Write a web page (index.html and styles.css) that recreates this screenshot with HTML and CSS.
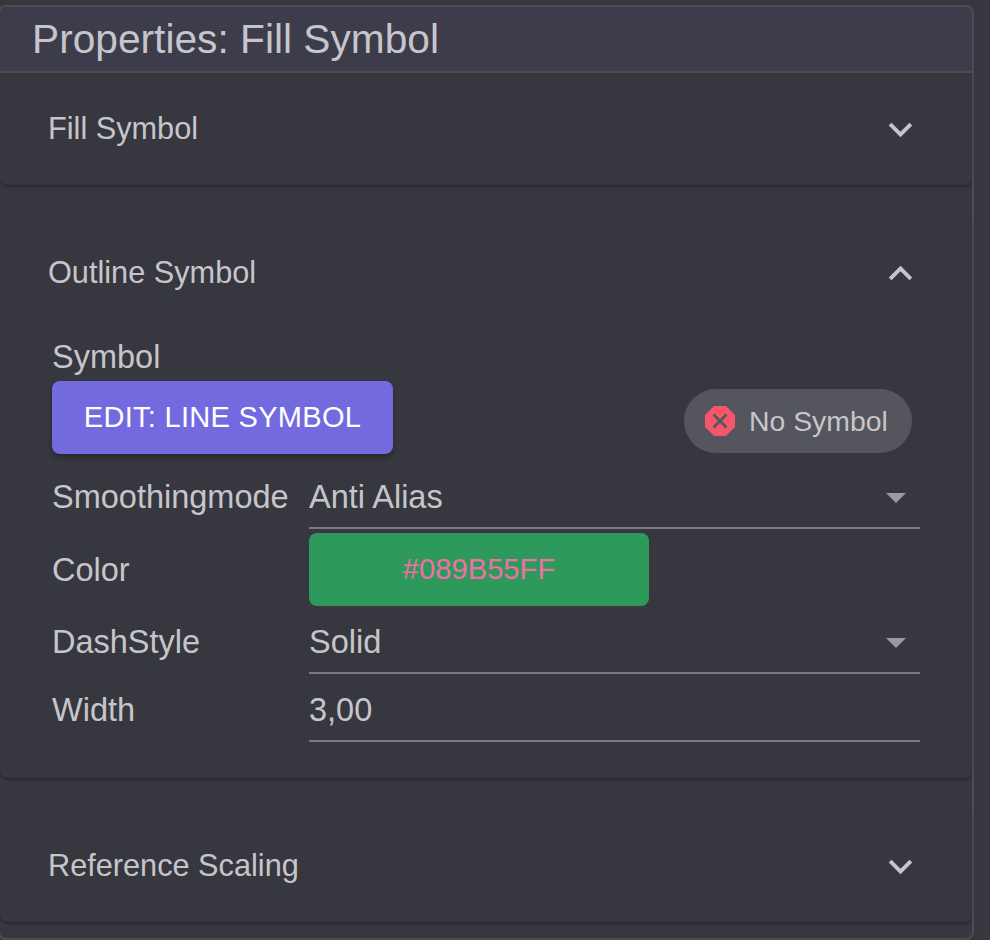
FILE: index.html
```html
<!DOCTYPE html>
<html lang="en">
<head>
<meta charset="utf-8">
<title>Properties: Fill Symbol</title>
<link rel="stylesheet" href="styles.css">
</head>
<body>
<section class="card">
  <h1 class="card-title">Properties: Fill Symbol</h1>
  <div class="panel">
    <div class="panel-head">
      <span>Fill Symbol</span>
      <svg class="chevron" viewBox="0 0 24 24"><path d="M16.59 8.59 12 13.17 7.41 8.59 6 10l6 6 6-6z"/></svg>
    </div>
  </div>
  <div class="panel panel-gap">
    <div class="panel-head">
      <span>Outline Symbol</span>
      <svg class="chevron" viewBox="0 0 24 24"><path d="M12 8l-6 6 1.41 1.41L12 10.83l4.59 4.58L18 14z"/></svg>
    </div>
    <div class="panel-body">
      <div class="symbol-row">
        <div class="symbol-left">
          <div class="symbol-label">Symbol</div>
          <button class="edit-btn" type="button">EDIT: LINE SYMBOL</button>
        </div>
        <div class="chip">
          <svg class="chip-icon" viewBox="0 0 30 30"><path class="oct" d="M9 0h12l9 9v12l-9 9H9l-9-9V9z"/><path class="oct-x" d="M8.500 8.500l13 13M21.500 8.500l-13 13"/></svg>
          <span>No Symbol</span>
        </div>
      </div>
      <div class="row row-smooth">
        <div class="label">Smoothingmode</div>
        <div class="field">
          <span>Anti Alias</span>
          <svg class="arrow" viewBox="0 0 24 24"><path d="M7 10l5 5 5-5z"/></svg>
        </div>
      </div>
      <div class="row-color">
        <div class="label">Color</div>
        <button class="color-btn" type="button">#089B55FF</button>
      </div>
      <div class="row row-dash">
        <div class="label">DashStyle</div>
        <div class="field">
          <span>Solid</span>
          <svg class="arrow" viewBox="0 0 24 24"><path d="M7 10l5 5 5-5z"/></svg>
        </div>
      </div>
      <div class="row row-width">
        <div class="label">Width</div>
        <div class="field"><span>3,00</span></div>
      </div>
    </div>
  </div>
  <div class="panel panel-gap">
    <div class="panel-head">
      <span>Reference Scaling</span>
      <svg class="chevron" viewBox="0 0 24 24"><path d="M16.59 8.59 12 13.17 7.41 8.59 6 10l6 6 6-6z"/></svg>
    </div>
  </div>
</section>
</body>
</html>
```
FILE: styles.css
```css
html, body {
  margin: 0;
  height: 940px;
  overflow: hidden;
  background: #37373f;
}
body {
  font-family: "Liberation Sans", Arial, sans-serif;
  color: #c6c6ca;
}
.card {
  box-sizing: border-box;
  width: 976px;
  height: 935px;
  margin: 5px 0 0 -2px;
  border: 2px solid #4c4c55;
  border-radius: 8px;
  background: #37373f;
}
.card-title {
  box-sizing: border-box;
  height: 66px;
  margin: 0;
  padding-left: 32px;
  background: #3d3c4a;
  border-bottom: 2px solid #4c4c55;
  border-radius: 6px 6px 0 0;
  font-size: 40.7px;
  font-weight: 400;
  line-height: 64px;
  color: #c6c6ca;
}
.panel {
  border-radius: 0 0 8px 8px;
  box-shadow: 0 2px 2px rgba(0, 0, 0, .25);
}
.panel-gap {
  margin-top: 32px;
  border-radius: 8px;
}
.panel-head {
  display: flex;
  align-items: center;
  justify-content: space-between;
  height: 112px;
  padding: 0 48.5px 0 48px;
  font-size: 30.7px;
}
.chevron {
  width: 47px;
  height: 47px;
  fill: #c6c6ca;
}
.panel-body {
  padding: 12px 52px 36px;
}
.symbol-row {
  display: flex;
  justify-content: space-between;
  align-items: flex-end;
  padding-right: 8px;
}
.symbol-label {
  height: 40px;
  font-size: 32.5px;
  line-height: 32px;
}
.edit-btn {
  display: block;
  width: 341px;
  height: 73px;
  border: 0;
  border-radius: 8px;
  background: #736adf;
  color: #fff;
  font: 29px "Liberation Sans", Arial, sans-serif;
  letter-spacing: .3px;
  box-shadow: 0 3px 5px rgba(0, 0, 0, .3);
}
.chip {
  display: flex;
  align-items: center;
  gap: 14px;
  box-sizing: border-box;
  width: 228px;
  height: 64px;
  margin-bottom: 1px;
  padding-left: 21px;
  border-radius: 32px;
  background: #55555e;
  font-size: 28.4px;
}
.chip-icon {
  width: 30px;
  height: 30px;
}
.oct {
  fill: #f4566a;
}
.oct-x {
  fill: none;
  stroke: #55555e;
  stroke-width: 2.600;
}
.row, .row-color {
  display: grid;
  grid-template-columns: 257px 1fr;
}
.label {
  font-size: 32.5px;
  line-height: 32px;
}
.field {
  display: flex;
  align-items: flex-start;
  justify-content: space-between;
  border-bottom: 2px solid #7a7a80;
  font-size: 32.5px;
  line-height: 32px;
}
.row-smooth .label, .row-smooth .field { padding-top: 27px; }
.row-smooth .field { padding-bottom: 14px; }
.row-dash .label, .row-dash .field { padding-top: 20px; }
.row-dash .field { padding-bottom: 14px; }
.row-width .label, .row-width .field { padding-top: 20px; }
.row-width .field { padding-bottom: 14px; }
.arrow {
  width: 48px;
  height: 48px;
  margin: -8px 0 -8px;
  fill: #9a9a9f;
}
.row-color {
  align-items: center;
  margin-top: 4px;
}
.color-btn {
  width: 340px;
  height: 73px;
  border: 0;
  border-radius: 8px;
  background: #2d995a;
  color: #ef6fa8;
  font: 29.2px "Liberation Sans", Arial, sans-serif;
}
```
